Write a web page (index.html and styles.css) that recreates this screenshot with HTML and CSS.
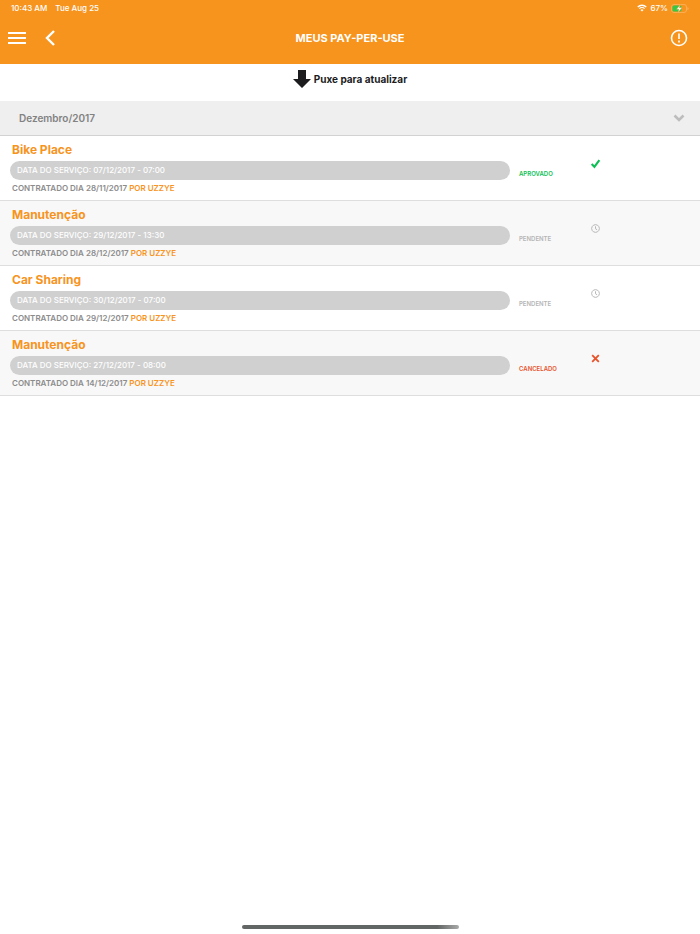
FILE: index.html
```html
<!DOCTYPE html>
<html lang="pt-BR">
<head>
<meta charset="utf-8">
<meta name="viewport" content="width=device-width, initial-scale=1">
<title>Meus Pay-Per-Use</title>
<link rel="stylesheet" href="styles.css">
</head>
<body>
<header class="header">
    <div class="statusbar">
        <span class="clock">10:43 AM</span>
        <span>Tue Aug 25</span>
        <span class="device">
            <svg class="wifi" viewBox="0 0 20 15" aria-hidden="true">
                <path d="M1.5 5.5a12 12 0 0 1 17 0M4.8 8.8a7.4 7.4 0 0 1 10.4 0" fill="none" stroke="#fff" stroke-width="2.6"/>
                <path d="M10 14.5L6.9 11.3a4.4 4.4 0 0 1 6.2 0z" fill="#fff"/>
            </svg>
            <span>67%</span>
            <svg class="battery" viewBox="0 0 36 18" aria-hidden="true">
                <rect x="1" y="1" width="30" height="16" rx="5" fill="none" stroke="#fbb765" stroke-width="1.5"/>
                <path d="M33 6v6q2-1 2-3t-2-3z" fill="#fbb765"/>
                <rect x="3" y="3" width="18" height="12" rx="3" fill="#34c84a"/>
                <path d="M18.500 1.500l-7.500 9h5l-2 6.500 8-9.500h-5.500z" fill="#fff" stroke="#f7941e" stroke-width=".8"/>
            </svg>
        </span>
    </div>
    <nav class="navbar">
        <div class="side">
            <button type="button" class="icon-btn" aria-label="Menu">
                <svg width="18" height="14" viewBox="0 0 18 14"><path d="M0 2h18M0 7h18M0 12h18" stroke="#fff" stroke-width="2"/></svg>
            </button>
            <button type="button" class="icon-btn" aria-label="Voltar">
                <svg width="10" height="16" viewBox="0 0 10 16"><path d="M9 1L2 8l7 7" fill="none" stroke="#fff" stroke-width="2.400"/></svg>
            </button>
        </div>
        <h1>MEUS PAY-PER-USE</h1>
        <div class="side right">
            <button type="button" class="icon-btn" aria-label="Avisos">
                <svg width="18" height="18" viewBox="0 0 18 18"><circle cx="9" cy="9" r="7.500" fill="none" stroke="#fff" stroke-width="1.600"/><path d="M9 4.500v5.500M9 11.500v2" stroke="#fff" stroke-width="1.600"/></svg>
            </button>
        </div>
    </nav>
</header>

<main>
    <p class="refresh">
        <svg width="18" height="18" viewBox="0 0 18 18" aria-hidden="true"><path d="M5 0h8v9h5l-9 9-9-9h5z" fill="#1c1c1e"/></svg>
        Puxe para atualizar
    </p>
    <button type="button" class="month">
        Dezembro/2017
        <svg width="12" height="8" viewBox="0 0 12 8" aria-hidden="true"><path d="M1.500 1.500L6 6l4.500-4.500" fill="none" stroke="#bdbdbd" stroke-width="2.600"/></svg>
    </button>
    <ul class="list">
        <li class="item">
            <div class="info">
                <h2>Bike Place</h2>
                <p class="date">DATA DO SERVIÇO: 07/12/2017 - 07:00</p>
                <p class="hired">CONTRATADO DIA 28/11/2017 <a href="#">POR UZZYE</a></p>
            </div>
            <span class="status approved">APROVADO</span>
            <svg class="mark" viewBox="0 0 10 10" aria-hidden="true"><path d="M1.500 5.500L4 8l4.500-6" fill="none" stroke="#0cbf55" stroke-width="1.900"/></svg>
        </li>
        <li class="item">
            <div class="info">
                <h2>Manutenção</h2>
                <p class="date">DATA DO SERVIÇO: 29/12/2017 - 13:30</p>
                <p class="hired">CONTRATADO DIA 28/12/2017 <a href="#">POR UZZYE</a></p>
            </div>
            <span class="status pending">PENDENTE</span>
            <svg class="mark" viewBox="0 0 10 10" aria-hidden="true"><path d="M5 1.500a3.500 3.500 0 1 0 .01 0zM5 3v2.200l1.500 1" fill="none" stroke="#b5b5b5" stroke-width=".9"/></svg>
        </li>
        <li class="item">
            <div class="info">
                <h2>Car Sharing</h2>
                <p class="date">DATA DO SERVIÇO: 30/12/2017 - 07:00</p>
                <p class="hired">CONTRATADO DIA 29/12/2017 <a href="#">POR UZZYE</a></p>
            </div>
            <span class="status pending">PENDENTE</span>
            <svg class="mark" viewBox="0 0 10 10" aria-hidden="true"><path d="M5 1.500a3.500 3.500 0 1 0 .01 0zM5 3v2.200l1.500 1" fill="none" stroke="#b5b5b5" stroke-width=".9"/></svg>
        </li>
        <li class="item">
            <div class="info">
                <h2>Manutenção</h2>
                <p class="date">DATA DO SERVIÇO: 27/12/2017 - 08:00</p>
                <p class="hired">CONTRATADO DIA 14/12/2017 <a href="#">POR UZZYE</a></p>
            </div>
            <span class="status canceled">CANCELADO</span>
            <svg class="mark" viewBox="0 0 10 10" aria-hidden="true"><path d="M2 2l6 6M8 2L2 8" fill="none" stroke="#e8532b" stroke-width="1.700"/></svg>
        </li>
    </ul>
</main>
<div class="home-bar"></div>
</body>
</html>
```

FILE: styles.css
```css
* {
    box-sizing: border-box;
}
body {
    margin: 0;
    min-height: 100vh;
    display: flex;
    flex-direction: column;
    background: #fff;
    color: #8c8c8c;
    font-family: Inter, "Open Sans", sans-serif;
}
h1, h2, p, ul {
    margin: 0;
    padding: 0;
}
button {
    font-family: inherit;
    border: 0;
    padding: 0;
    background: none;
}
a {
    color: #f7941e;
    text-decoration: none;
}
svg {
    display: block;
    flex: none;
}

/* header */
.header {
    background: #f7941e;
    color: #fff;
}
.statusbar {
    display: flex;
    align-items: center;
    gap: 8px;
    height: 16px;
    padding: 0 11px;
    font-size: 8px;
    font-weight: 500;
}
.device {
    display: flex;
    align-items: center;
    gap: 3px;
    margin-left: auto;
}
.wifi {
    width: 10px;
    height: 8px;
}
.battery {
    width: 18px;
    height: 9px;
}
.navbar {
    display: grid;
    grid-template-columns: 1fr auto 1fr;
    align-items: center;
    height: 48px;
    padding: 0 8px 4px;
}
.navbar h1 {
    font-size: 11px;
    font-weight: 700;
}
.side {
    display: flex;
    gap: 19px;
}
.right {
    justify-content: flex-end;
    padding-right: 4px;
}

.refresh {
    display: flex;
    align-items: center;
    justify-content: center;
    gap: 3px;
    height: 37px;
    padding-bottom: 7px;
    color: #1c1c1e;
    font-size: 10px;
    font-weight: 700;
}
.month {
    display: flex;
    align-items: center;
    justify-content: space-between;
    width: 100%;
    height: 35px;
    padding: 0 15px 0 19px;
    border-bottom: 1px solid #d2d2d2;
    background: #efefef;
    color: #828282;
    font-size: 10px;
    font-weight: 600;
}

/* list */
.list {
    list-style: none;
}
.item {
    display: grid;
    grid-template-columns: 1fr 62px 110px;
    column-gap: 9px;
    align-items: center;
    height: 65px;
    padding-left: 10px;
    border-bottom: 1px solid #dedede;
}
.item:nth-child(even) {
    background: #f8f8f8;
}
.item h2 {
    padding-left: 2px;
    color: #f7941e;
    font-size: 12px;
    line-height: 22px;
    font-weight: 700;
}
.date {
    padding: 0 7px;
    border-radius: 10px;
    background: #d0d0d0;
    color: #fff;
    font-size: 8px;
    line-height: 19px;
    font-weight: 500;
}
.hired {
    padding-left: 2px;
    font-size: 8px;
    line-height: 17px;
    font-weight: 600;
}
.status {
    padding-top: 10px;
    font-size: 6px;
    font-weight: 600;
}
.approved {
    color: #0cbf55;
}
.pending {
    color: #b5b5b5;
}
.canceled {
    color: #e8532b;
}
.mark {
    width: 11px;
    height: 11px;
    margin-bottom: 10px;
}

.home-bar {
    width: 31%;
    height: 4px;
    margin: auto auto 5px;
    border-radius: 2px;
    background: linear-gradient(to right, #626664 90%, #a8aaa9);
}
```
